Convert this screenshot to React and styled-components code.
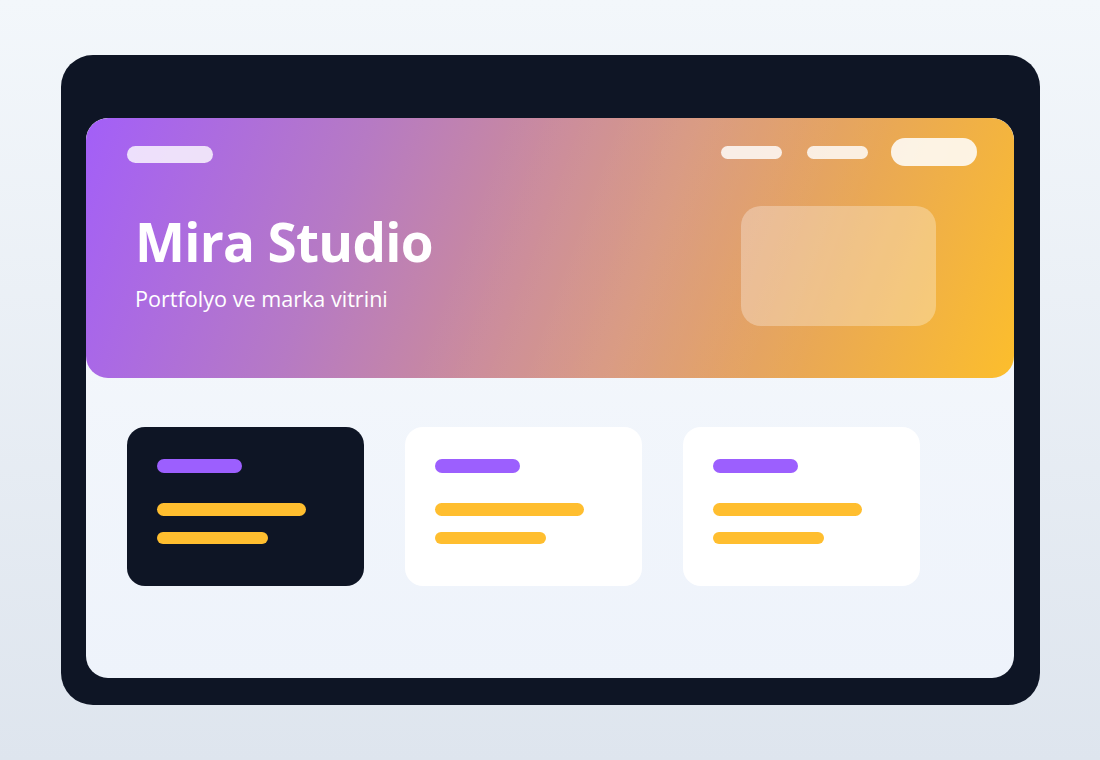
import React from "react";
import styled, { createGlobalStyle } from "styled-components";

const GlobalStyle = createGlobalStyle`
  html, body {
    margin: 0;
    padding: 0;
  }
  body {
    font-family: "Open Sans", "Noto Sans", sans-serif;
    background: linear-gradient(180deg, #f3f7fb 0%, #dee5ee 100%);
    min-height: 760px;
  }
`;

const Page = styled.div`
  width: 1100px;
  height: 760px;
  padding: 55px 0 0 61px;
  box-sizing: border-box;
`;

const Device = styled.div`
  width: 979px;
  height: 650px;
  box-sizing: border-box;
  padding: 63px 26px 27px 25px;
  background: #0e1525;
  border-radius: 32px;
  display: flex;
`;

const Screen = styled.div`
  flex: 1;
  display: flex;
  flex-direction: column;
  border-radius: 22px;
  overflow: hidden;
  background: linear-gradient(180deg, #f6f9fc 0%, #eef3fb 100%);
`;

const Hero = styled.header`
  height: 260px;
  box-sizing: border-box;
  padding: 20px 37px 0 41px;
  border-radius: 22px;
  background:
    linear-gradient(110deg, rgba(255, 255, 255, 0) 40%, rgba(255, 255, 255, 0.05) 60%, rgba(255, 255, 255, 0) 80%),
    linear-gradient(110deg, #a35ff8 0%, #b67ac4 28%, #cc8c98 48%, #e3a163 72%, #fcbe2c 100%);
  display: flex;
  flex-direction: column;
`;

const Nav = styled.nav`
  height: 28px;
  display: flex;
  align-items: center;
  justify-content: space-between;
`;

const Links = styled.div`
  display: flex;
  align-items: center;
`;

const Pill = styled.span`
  display: block;
  width: ${(p) => p.$w}px;
  height: ${(p) => p.$h}px;
  border-radius: ${(p) => p.$h / 2}px;
  margin-left: ${(p) => p.$gap || 0}px;
  background: rgba(255, 255, 255, ${(p) => p.$alpha || 0.82});
`;

const Logo = styled(Pill)`
  margin-top: 4px;
`;

const HeroBody = styled.div`
  display: flex;
  justify-content: space-between;
  align-items: flex-start;
  margin-top: 40px;
  padding-left: 8px;
  padding-right: 41px;
`;

const Intro = styled.div`
  display: flex;
  flex-direction: column;
`;

const Title = styled.h1`
  margin: 5px 0 0;
  font-size: 53px;
  line-height: 62px;
  font-weight: 700;
  color: #ffffff;
  letter-spacing: -0.7px;
`;

const Subtitle = styled.p`
  margin: 12px 0 0;
  font-size: 21.6px;
  line-height: 28px;
  color: #ffffff;
`;

const Preview = styled.div`
  width: 195px;
  height: 120px;
  border-radius: 20px;
  background: rgba(255, 255, 255, 0.3);
`;

const Cards = styled.section`
  display: flex;
  gap: 41px;
  padding: 49px 41px 0;
`;

const Card = styled.article`
  width: 237px;
  height: 159px;
  box-sizing: border-box;
  padding: 32px 30px;
  border-radius: 18px;
  background: ${(p) => (p.$dark ? "#0e1525" : "#ffffff")};
  display: flex;
  flex-direction: column;
  align-items: flex-start;
`;

const Bar = styled.span`
  display: block;
  width: ${(p) => p.$w}px;
  height: ${(p) => p.$h}px;
  border-radius: ${(p) => p.$h / 2}px;
  margin-top: ${(p) => p.$gap || 0}px;
  background: ${(p) => (p.$accent ? "#9c5ffe" : "#ffbe2f")};
`;

const cards = [{ dark: true }, { dark: false }, { dark: false }];

const App = () => {
  return (
    <Page>
      <GlobalStyle />
      <Device>
        <Screen>
          <Hero>
            <Nav>
              <Logo $w={86} $h={17} $alpha={0.8} />
              <Links>
                <Pill $w={61} $h={13} />
                <Pill $w={61} $h={13} $gap={25} />
                <Pill $w={86} $h={28} $gap={23} $alpha={0.85} />
              </Links>
            </Nav>
            <HeroBody>
              <Intro>
                <Title>Mira Studio</Title>
                <Subtitle>Portfolyo ve marka vitrini</Subtitle>
              </Intro>
              <Preview />
            </HeroBody>
          </Hero>
          <Cards>
            {cards.map((c, i) => (
              <Card key={i} $dark={c.dark}>
                <Bar $accent $w={85} $h={14} />
                <Bar $w={149} $h={13} $gap={30} />
                <Bar $w={111} $h={12} $gap={16} />
              </Card>
            ))}
          </Cards>
        </Screen>
      </Device>
    </Page>
  );
};

export default App;
